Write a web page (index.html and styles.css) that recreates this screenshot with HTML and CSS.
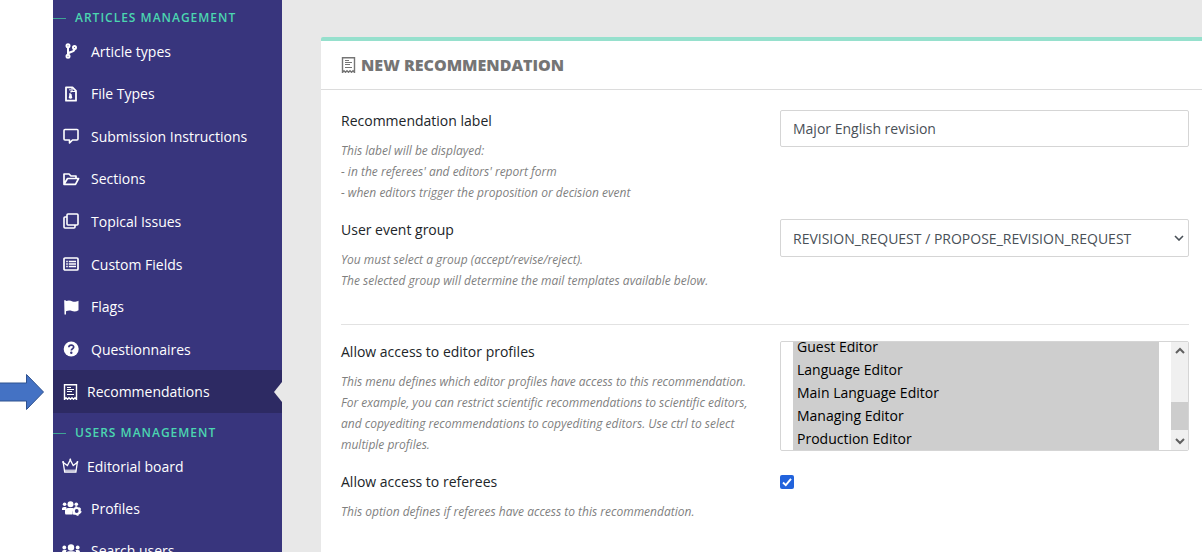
FILE: index.html
```html
<!DOCTYPE HTML>
<html lang="en">
<head>
<meta charset="utf-8">
<title>New recommendation</title>
<link rel="stylesheet" href="styles.css">
</head>

<body>
<div class="page">
	<div class="gutter">
		<svg class="pointer" width="45" height="38" viewBox="0 0 45 38"><path d="M-2 10H26.500V1.500L43.500 19L26.500 36.500V28H-2Z" fill="#4472c4" stroke="#2f528f"/></svg>
	</div>
	<nav class="sidebar">
		<h2>Articles management</h2>
		<ul class="menu menu-articles">
			<li><a href="#"><svg class="icon" viewBox="0 0 16 16"><g fill="none" stroke="#fff" stroke-width="2"><circle cx="5" cy="2.700" r="1.500"/><circle cx="5" cy="13.300" r="1.500"/><circle cx="11.500" cy="4.500" r="1.500"/><path d="M5 4V12M11.500 6C11.500 10 5 8 5 11.500"/></g></svg>Article types</a></li>
			<li><a href="#"><svg class="icon" viewBox="0 0 16 16"><path d="M3 1.300H9.500L13 4.800V14.700H3Z" fill="none" stroke="#fff" stroke-width="1.800" stroke-linejoin="round"/><path d="M9 1V5.500H13M7 3V4.500M8 5V6.500M7 7V8.500" fill="none" stroke="#fff" stroke-width="1.200"/><path d="M6.500 8H8.500L9.200 11.500A1.800 1.800 0 0 1 5.800 11.500Z" fill="#fff"/></svg>File Types</a></li>
			<li><a href="#"><svg class="icon" viewBox="0 0 16 16"><path d="M2 1.500H14Q15 1.500 15 2.500V11Q15 12 14 12H9.500L6.500 15V12H2Q1 12 1 11V2.500Q1 1.500 2 1.500Z" fill="none" stroke="#fff" stroke-width="1.600" stroke-linejoin="round"/></svg>Submission Instructions</a></li>
			<li><a href="#"><svg class="icon" viewBox="0 0 16 16"><path d="M1 13.300V3H6L8 5H13V7.500M1 13.300L4.500 7.500H15.600L12.500 13.300Z" fill="none" stroke="#fff" stroke-width="1.700" stroke-linejoin="round"/></svg>Sections</a></li>
			<li><a href="#"><svg class="icon" viewBox="0 0 16 16"><g fill="none" stroke="#fff" stroke-width="1.600" stroke-linejoin="round"><rect x="4" y="1" width="11" height="11" rx="1"/><path d="M4 4H2Q1 4 1 5V14Q1 15 2 15H11Q12 15 12 14V12"/></g></svg>Topical Issues</a></li>
			<li><a href="#"><svg class="icon" viewBox="0 0 16 16"><rect x="1" y="2" width="14" height="12" rx="1" fill="none" stroke="#fff" stroke-width="1.700"/><path d="M3.200 5.500H4.800M3.200 8H4.800M3.200 10.500H4.800M5.800 5.500H13M5.800 8H13M5.800 10.500H13" stroke="#fff" stroke-width="1.400"/></svg>Custom Fields</a></li>
			<li><a href="#"><svg class="icon" viewBox="0 0 16 16"><path d="M1.200 1.500A1 1 0 0 1 3 2C6 1 7.500 1.500 9.500 2.500C11.500 3.200 13 2.800 15.500 1.800V11.200C13.500 12.500 11 12.800 9 12C7 11.200 5 11.400 3 12.200V15.500H1.500Z" fill="#fff"/></svg>Flags</a></li>
			<li><a href="#"><svg class="icon" viewBox="0 0 16 16"><circle cx="8.200" cy="8" r="7.500" fill="#fff"/><path d="M5.800 6.200C6 3.500 10.700 3.400 10.700 6.100C10.700 7.800 8.300 7.700 8.300 9.500" fill="none" stroke="#38357d" stroke-width="1.700"/><circle cx="8.300" cy="11.800" r="1.200" fill="#38357d"/></svg>Questionnaires</a></li>
			<li class="ac"><a href="#" class="thin"><svg class="icon" viewBox="0 0 16 16"><use href="#receipt"/></svg>Recommendations</a></li>
		</ul>
		<h2>Users management</h2>
		<ul class="menu menu-users">
			<li><a href="#" class="thin"><svg class="icon" viewBox="0 0 16 16"><path d="M1.700 14H12.900L14.300 4.500L10.200 7.500L7.300 2L4.400 7.500L0.200 4.500Z" fill="none" stroke="#fff" stroke-width="1.300"/><path d="M1.500 12.200H13.100" stroke="#fff"/><circle cx="0.200" cy="4" r=".9" fill="#fff"/><circle cx="7.300" cy="1.500" r=".9" fill="#fff"/><circle cx="14.400" cy="4" r=".9" fill="#fff"/></svg>Editorial board</a></li>
			<li><a href="#"><svg class="icon" viewBox="0 0 16 16"><g fill="#fff"><circle cx="1.600" cy="4.300" r="1.800"/><circle cx="13.300" cy="4.300" r="1.800"/><circle cx="7.500" cy="4.300" r="3"/><path d="M-1 10V8.500Q-1 7 1 7H3.500L2.500 10ZM3 14.500Q2 14.500 2 13V11Q2 8 5 8H10L9.500 14.500Z"/></g><circle cx="13.700" cy="11" r="3" fill="none" stroke="#fff" stroke-width="2.200"/><circle cx="13.700" cy="11" r="4.200" fill="none" stroke="#fff" stroke-width="1.200" stroke-dasharray="2.200"/></svg>Profiles</a></li>
			<li><a href="#"><svg class="icon" viewBox="0 0 16 16"><g fill="#fff"><circle cx="1.300" cy="4.500" r="1.900"/><circle cx="14.700" cy="4.500" r="1.900"/><circle cx="8" cy="4.500" r="3.200"/><path d="M-1 11V9Q-1 7 1 7H3.500L2.500 11ZM17 11V9Q17 7 15 7H12.500L13.500 11ZM3 14.500V11Q3 8.300 6 8.300H10Q13 8.300 13 11V14.500Z"/></g></svg>Search users</a></li>
		</ul>
	</nav>
	<main class="content">
		<form class="card">
			<h1><svg class="icon" viewBox="0 0 16 16"><use href="#receipt"/></svg>New recommendation</h1>
			<div class="fields">
				<div class="row">
					<div>
						<label for="label">Recommendation label</label>
						<p>This label will be displayed:<br>- in the referees' and editors' report form<br>- when editors trigger the proposition or decision event</p>
					</div>
					<input type="text" id="label" class="control" value="Major English revision">
				</div>
				<div class="row">
					<div>
						<label for="group">User event group</label>
						<p>You must select a group (accept/revise/reject).<br>The selected group will determine the mail templates available below.</p>
					</div>
					<select id="group" class="control dropdown">
						<option>REVISION_REQUEST / PROPOSE_REVISION_REQUEST</option>
					</select>
				</div>
				<hr>
				<div class="row">
					<div>
						<label for="profiles">Allow access to editor profiles</label>
						<p>This menu defines which editor profiles have access to this recommendation. For example, you can restrict scientific recommendations to scientific editors, and copyediting recommendations to copyediting editors. Use ctrl to select multiple profiles.</p>
					</div>
					<div class="listbox">
						<select id="profiles" multiple>
							<option selected>Administrator</option>
							<option selected>Assistant Editor</option>
							<option selected>Associate Editor</option>
							<option selected>Chief Editor</option>
							<option selected>Copy Editor</option>
							<option selected>Editor</option>
							<option selected>Editorial Office</option>
							<option selected>Guest Editor</option>
							<option selected>Language Editor</option>
							<option selected>Main Language Editor</option>
							<option selected>Managing Editor</option>
							<option selected>Production Editor</option>
						</select>
						<div class="bar">
							<button type="button" id="goUp" aria-label="Scroll up"><svg width="10" height="7"><path d="M1 6L5 2L9 6"/></svg></button>
							<div class="thumb"></div>
							<button type="button" id="goDown" aria-label="Scroll down"><svg width="10" height="7"><path d="M1 1L5 5L9 1"/></svg></button>
						</div>
					</div>
				</div>
				<div class="row">
					<div>
						<label for="referees">Allow access to referees</label>
						<p>This option defines if referees have access to this recommendation.</p>
					</div>
					<input type="checkbox" id="referees" class="check" checked>
				</div>
			</div>
		</form>
	</main>
</div>

<svg class="defs" width="0" height="0">
	<symbol id="receipt" viewBox="0 0 16 16">
		<path d="M1.500 15.500V.7H13.500V15.500L12 13.800L10.500 15.300L9 13.800L7.500 15.300L6 13.800L4.500 15.300L3 13.800Z" fill="none" stroke="currentColor" stroke-width="1.400"/>
		<path d="M4 3.500H8M4 5.500H11M4 7.500H9M4 10.500H11" stroke="currentColor" stroke-width="1.200"/>
	</symbol>
</svg>

<script>
	var list = document.querySelector("#profiles");
	// keep the last profile flush with the bottom of the list
	list.scrollTop = list.scrollHeight - list.clientHeight - 7;
	document.querySelector("#goUp").onclick = function(){
		list.scrollTop -= 23;
	};
	document.querySelector("#goDown").onclick = function(){
		list.scrollTop += 23;
	};
</script>
</body>
</html>
```
FILE: styles.css
```css
* {margin:0; padding:0; box-sizing:border-box;}
body {font:14px/21px "Open Sans", sans-serif; color:#212529; background:#fff;}
li {list-style:none;}
a {text-decoration:none;}

.page {display:flex; height:calc(100vh - 4px); overflow:hidden;}
.gutter {flex:0 0 53px; padding-top:373px;}
.pointer {display:block;}
.defs {position:absolute;}

.sidebar {flex:0 0 229px; background:#38357d;}
.sidebar h2 {display:flex; align-items:center; gap:9px; padding:7px 0 1px; font-size:12px; line-height:22px; font-weight:600; letter-spacing:1px; text-transform:uppercase; color:#4bd6b0;}
.sidebar h2:before {content:""; width:13px; height:1px; background:#3fa394;}
.menu {display:grid; grid-auto-rows:1fr;}
.menu-articles {min-height:383px; margin-bottom:2px;}
.menu-users {min-height:127px;}
.menu li {display:flex;}
.menu a {flex:1; display:flex; align-items:center; gap:12px; padding-left:10px; color:#fff;}
.menu a.thin {gap:8px;}
.icon {width:16px; height:16px; flex:none; overflow:visible;}
.menu .ac {position:relative; background:#2d2a63;}
.menu .ac:after {content:""; position:absolute; right:0; top:50%; margin-top:-10px; border:10px solid transparent; border-left:0; border-right:8px solid #e8e8e8;}

.content {flex:1; min-width:0; padding:37px 0 0 39px; background:#e8e8e8;}
.card {min-height:100%; background:#fff; border-top:4px solid #96e0cd; border-top-left-radius:2px;}
.card h1 {display:flex; align-items:center; gap:4px; padding:12px 20px; font-size:16px; line-height:24px; font-weight:800; text-transform:uppercase; color:#757575; border-bottom:1px solid #dcdcdc;}
.fields {display:flex; flex-direction:column; gap:16px; padding:20px 13px 20px 20px;}
.row {display:grid; grid-template-columns:minmax(0,1fr) minmax(0,1fr); gap:30px; align-items:start;}
.row label {display:block; margin-bottom:9px;}
.row p {font-size:12px; font-style:italic; color:#7f7f7f;}
hr {margin-top:17px; border:0; border-top:1px solid #e2e2e2;}

.control {width:100%; height:37px; padding:6px 12px; font:inherit; color:#495057; background:#fff; border:1px solid #d5d5d5; border-radius:2px; outline:0;}
.dropdown {height:38px; appearance:none; background:#fff url("data:image/svg+xml,%3Csvg xmlns='http://www.w3.org/2000/svg' width='10' height='6'%3E%3Cpath d='M1 1L5 5L9 1' fill='none' stroke='%23495057' stroke-width='1.600'/%3E%3C/svg%3E") no-repeat right 4px center;}

.listbox {display:flex; height:110px; border:1px solid #d5d5d5; border-radius:2px; overflow:hidden;}
.listbox select {flex:1; min-width:0; padding:6px 12px; font:inherit; background:#fff; border:0; outline:0; overflow-y:scroll; scrollbar-width:none;}
.listbox option {padding:1px 4px; line-height:21px; min-height:23px; color:#000;}
.listbox option:checked {color:#000; background:linear-gradient(#cecece,#cecece);}
.bar {flex:0 0 17px; display:flex; flex-direction:column; background:#f0f0f0;}
.bar button {display:flex; align-items:center; justify-content:center; height:17px; border:0; background:none;}
.bar path {fill:none; stroke:#606060; stroke-width:2;}
.thumb {height:28px; margin:auto 0 3px; background:#cdcdcd;}
.check {appearance:none; width:14px; height:14px; margin-top:4px; border-radius:2px; background:#2263dc url("data:image/svg+xml,%3Csvg xmlns='http://www.w3.org/2000/svg' width='14' height='14'%3E%3Cpath d='M3 7.500L5.800 10.200L11 3.800' fill='none' stroke='white' stroke-width='1.900'/%3E%3C/svg%3E") center;}
```
